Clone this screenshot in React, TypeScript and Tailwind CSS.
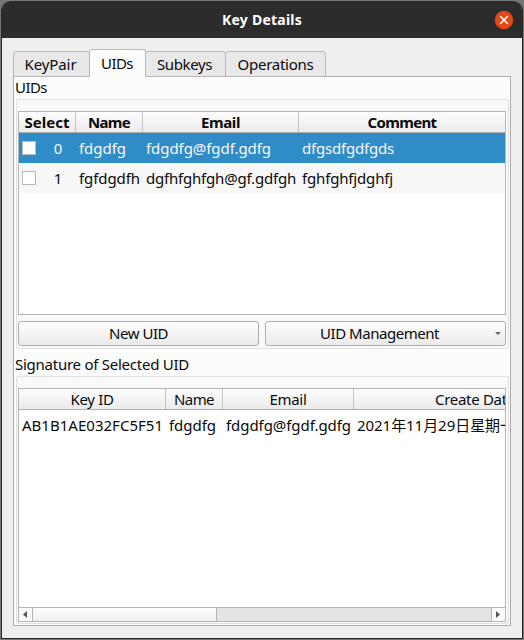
import { useLayoutEffect, useRef, useState } from "react";

// Text run whose tracking is adjusted so that it fills the given width.
function Fit({ text, width, className = "" }: { text: string; width: number; className?: string }) {
  const ref = useRef<HTMLSpanElement>(null);
  const [tracking, setTracking] = useState(0);
  useLayoutEffect(() => {
    const el = ref.current;
    if (el) setTracking((width - el.getBoundingClientRect().width) / text.length);
  }, []);
  return (
    <span ref={ref} className={`inline-block shrink-0 whitespace-pre ${className}`} style={{ letterSpacing: tracking }}>
      {text}
    </span>
  );
}

const headerBg = "bg-linear-to-b from-[#fdfdfd] to-[#ebebeb]";

function HeaderCell({ text, width, cell, last }: { text: string; width: number; cell: string; last?: boolean }) {
  return (
    <div className={`flex shrink-0 items-center justify-center ${cell} ${last ? "" : "border-r border-[#c4c4c4]"}`}>
      <Fit text={text} width={width} />
    </div>
  );
}

function UidRow({ id, name, email, comment, widths, className }: {
  id: string; name: string; email: string; comment: string; widths: number[]; className: string;
}) {
  return (
    <div className={`flex h-[30px] items-center ${className}`}>
      <div className="flex w-[57px] shrink-0 items-center pl-[3px]">
        <div className="size-[14px] border border-[#b9b9b9] bg-white" />
        <span className="ml-[14px] w-[16px] text-center">{id}</span>
      </div>
      <div className="w-[67px] shrink-0 pl-[3px]"><Fit text={name} width={widths[0]} /></div>
      <div className="w-[156px] shrink-0 pl-[3px]"><Fit text={email} width={widths[1]} /></div>
      <div className="pl-[3px]"><Fit text={comment} width={widths[2]} /></div>
    </div>
  );
}

function Tab({ text, width, className }: { text: string; width: number; className: string }) {
  return (
    <div className={`flex items-center justify-center rounded-t-[3px] border border-b-0 border-[#b8b8b8] ${className}`}>
      <Fit text={text} width={width} />
    </div>
  );
}

export default function App() {
  return (
    <div className="h-[640px] w-[524px] overflow-hidden bg-[#777777] p-px font-['Noto_Sans','Noto_Sans_CJK_SC',sans-serif] text-[15px] leading-[20px] text-[#0a0a0a]">
      <div className="flex h-[638px] w-[522px] flex-col overflow-hidden rounded-t-[9px] border border-t-0 border-[#252525] bg-[#efefef]">
        <div className="flex h-[37px] shrink-0 items-center bg-[#2c2c2c] pl-[220px] font-bold text-white">
          <Fit text="Key Details" width={80} className="text-[14px]" />
          <svg className="ml-auto mr-[8px]" width="20" height="20" viewBox="0 0 20 20">
            <circle cx="10" cy="10" r="9.2" fill="#e24a19" />
            <path d="M6.3 6.3 13.7 13.7M13.7 6.3 6.3 13.7" stroke="#fff" strokeWidth="1.5" />
          </svg>
        </div>

        <div className="flex flex-col px-[11px] pt-[11px]">
          <div className="z-10 -mb-px flex h-[28px] shrink-0 items-end">
            <Tab text="KeyPair" width={52} className="h-[26px] w-[77px] border-b-1 bg-[#e8e8e8] pr-[2px]" />
            <Tab text="UIDs" width={32} className="-ml-px h-[28px] w-[57px] bg-[#fcfcfc] pr-px pb-[2px]" />
            <Tab text="Subkeys" width={55} className="-ml-px h-[26px] w-[81px] border-b-1 bg-[#e8e8e8] pr-[2px]" />
            <Tab text="Operations" width={76} className="-ml-px h-[26px] w-[101px] border-b-1 bg-[#e8e8e8]" />
          </div>

          <div className="h-[550px] w-[498px] border border-[#acacac] bg-[#fcfcfc] pl-px">
            <div className="h-[22px]"><Fit text="UIDs" width={32} /></div>
            <div className="ml-px h-[250px] w-[493px] rounded-[2px] border border-[#e0e0e0] bg-[#f9f9f9] pt-[11px] pl-px">
              <div className="h-[204px] w-[488px] border border-[#b5b5b5] bg-white">
                <div className={`flex h-[21px] border-b border-[#b0b0b0] font-bold ${headerBg}`}>
                  <HeaderCell text="Select" width={45} cell="w-[57px]" />
                  <HeaderCell text="Name" width={42} cell="w-[67px]" />
                  <HeaderCell text="Email" width={39} cell="w-[156px]" />
                  <HeaderCell text="Comment" width={69} cell="w-[206px]" last />
                </div>
                <UidRow id="0" name="fdgdfg" email="fdgdfg@fgdf.gdfg" comment="dfgsdfgdfgds" widths={[47, 125, 92]} className="bg-[#308cc6] text-[#f4f8fb]" />
                <UidRow id="1" name="fgfdgdfh" email="dgfhfghfgh@gf.gdfgh" comment="fghfghfjdghfj" widths={[61, 150, 91]} className="bg-[#f7f7f7]" />
              </div>
              <div className="mt-[6px] flex gap-[6px]">
                <div className={`flex h-[25px] w-[241px] items-center justify-center rounded-[3px] border border-[#adadad] pb-px ${headerBg}`}>
                  <Fit text="New UID" width={59} />
                </div>
                <div className={`flex h-[25px] w-[241px] items-center rounded-[3px] border border-[#adadad] pb-px pl-[54px] ${headerBg}`}>
                  <Fit text="UID Management" width={119} />
                  <svg className="mr-[4px] ml-auto" width="6" height="3" viewBox="0 0 6 3">
                    <path d="M0 0H6L3 3Z" fill="#666" />
                  </svg>
                </div>
              </div>
            </div>

            <div className="h-[27px] pt-[5px]"><Fit text="Signature of Selected UID" width={174} /></div>
            <div className="ml-px h-[248px] w-[493px] rounded-[2px] border border-[#e0e0e0] bg-[#f9f9f9] pt-[11px] pl-px">
              <div className="flex h-[234px] w-[488px] flex-col overflow-hidden border border-[#b5b5b5] bg-white">
                <div className={`flex h-[21px] shrink-0 border-b border-[#b0b0b0] ${headerBg}`}>
                  <HeaderCell text="Key ID" width={43} cell="w-[147px]" />
                  <HeaderCell text="Name" width={40} cell="w-[57px]" />
                  <HeaderCell text="Email" width={37} cell="w-[131px]" />
                  <HeaderCell text="Create Date" width={80} cell="w-[242px]" last />
                </div>
                <div className="flex h-[30px] shrink-0 items-center">
                  <div className="w-[147px] shrink-0 pl-[3px]"><Fit text="AB1B1AE032FC5F51" width={141} /></div>
                  <div className="w-[57px] shrink-0 pl-[3px]"><Fit text="fdgdfg" width={47} /></div>
                  <div className="w-[131px] shrink-0 pl-[3px]"><Fit text="fdgdfg@fgdf.gdfg" width={125} /></div>
                  <div className="shrink-0 pl-[3px]"><Fit text="2021年11月29日星期一" width={158} /></div>
                </div>
                <div className="mt-auto flex h-[14px] shrink-0 border-t border-[#b5b5b5] bg-[#e4e4e4]">
                  <div className="flex w-[14px] items-center border-r border-[#b5b5b5] bg-[#fafafa] pl-[4px]">
                    <svg width="4" height="7" viewBox="0 0 4 7"><path d="M4 0V7L0 3.5Z" fill="#555" /></svg>
                  </div>
                  <div className="w-[184px] border-r border-[#b5b5b5] bg-linear-to-b from-[#fdfdfd] to-[#efefef]" />
                  <div className="ml-auto flex w-[14px] items-center border-l border-[#b5b5b5] bg-[#fafafa] pl-[4px]">
                    <svg width="4" height="7" viewBox="0 0 4 7"><path d="M0 0V7L4 3.5Z" fill="#555" /></svg>
                  </div>
                </div>
              </div>
            </div>
          </div>
        </div>
      </div>
    </div>
  );
}
